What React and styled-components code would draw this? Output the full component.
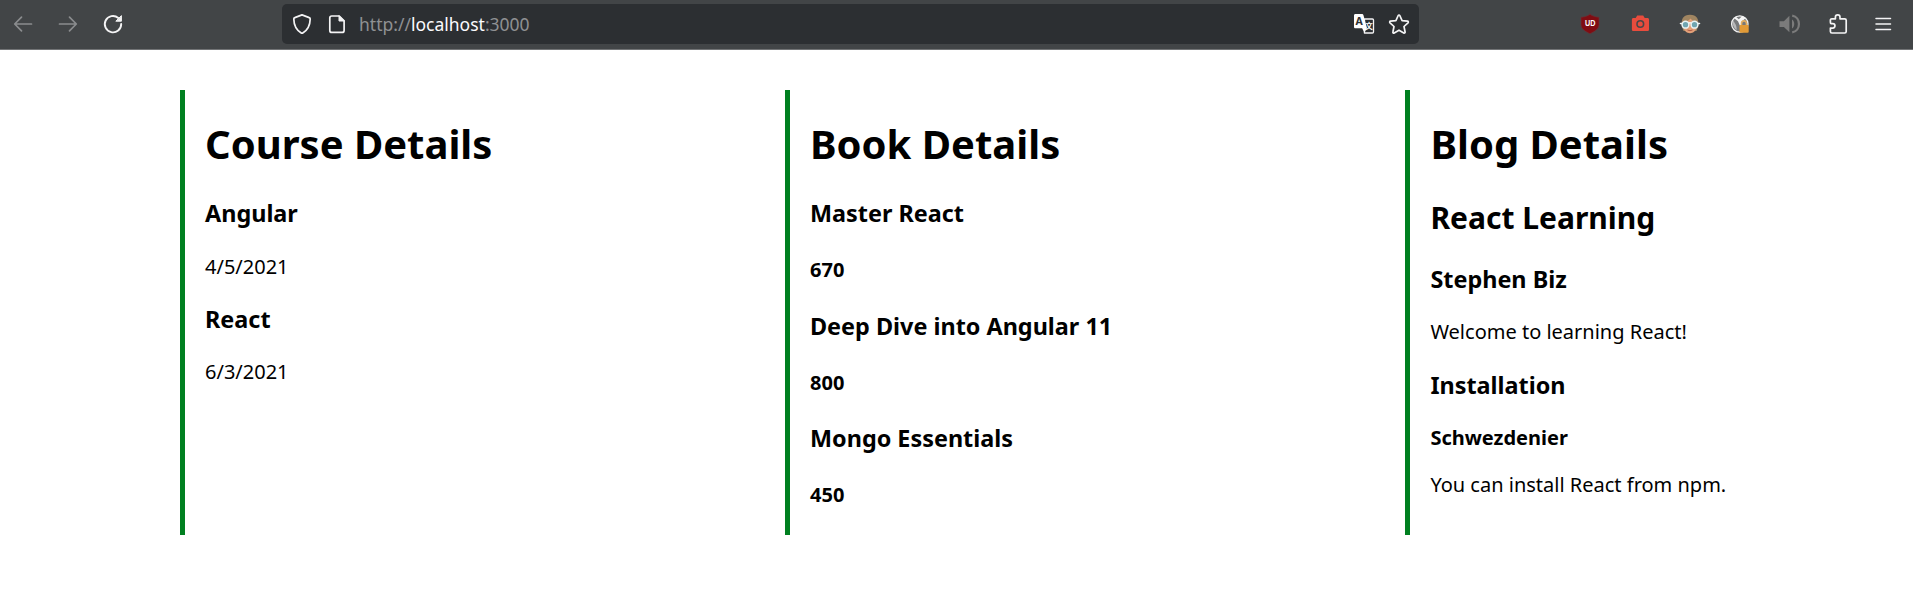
import React from "react";
import styled, { createGlobalStyle } from "styled-components";

const GlobalStyle = createGlobalStyle`
  * { box-sizing: border-box; }
  body { margin: 0; background: #fff; color: #000; font-family: "Noto Sans", sans-serif; overflow: hidden; }
`;

const Toolbar = styled.header`
  display: flex;
  align-items: center;
  height: 50px;
  padding: 0 18px 2px 11px;
  background: #424547;
  border-bottom: 1px solid #727476;
`;

const ButtonGroup = styled.div`
  display: flex;
  align-items: center;
  gap: ${(p) => p.$gap}px;
  margin-left: ${(p) => p.$start || 0};
`;

const Glyph = styled.svg`
  display: block;
  flex: none;
  width: 24px;
  height: 24px;
  fill: none;
  stroke: ${(p) => p.$color || "#f4f4f5"};
  stroke-width: 1.7;
  stroke-linecap: round;
  stroke-linejoin: round;
`;

const AddressBar = styled.div`
  display: flex;
  align-items: center;
  width: 1137px;
  height: 40px;
  margin-left: 157px;
  padding: 0 8px;
  border-radius: 5px;
  background: #2c2f32;
`;

const Url = styled.div`
  flex: 1;
  margin-left: 10px;
  font-size: 17.5px;
  line-height: 24px;
  color: #8f9193;
`;

const Host = styled.span`
  color: #fbfbfe;
`;

const Columns = styled.main`
  display: grid;
  grid-template-columns: 605px 620.4px 1fr;
  height: 445.5px;
  margin: 39.7px 0 0 180px;
`;

const Panel = styled.section`
  display: flow-root;
  border-left: 5px solid #008020;
  padding-left: 20px;
`;

const Title = styled.h1`
  margin: 26px 0 26.6px;
  font-size: 40px;
  line-height: 55px;
`;

const Heading = styled.h2`
  margin: 24.5px 0;
  font-size: 30px;
  line-height: 41px;
`;

const Subheading = styled.h3`
  margin: 23.4px 0;
  font-size: 23.4px;
  line-height: 32px;
`;

const Label = styled.h4`
  margin: 26.8px 0;
  font-size: 20px;
  line-height: 27px;
`;

const Text = styled.p`
  margin: 20px 0;
  font-size: 20px;
  line-height: 27px;
`;

const Author = styled(Text)`
  font-weight: 700;
`;

const courses = [
  { name: "Angular", date: "4/5/2021" },
  { name: "React", date: "6/3/2021" },
];

const books = [
  { name: "Master React", price: 670 },
  { name: "Deep Dive into Angular 11", price: 800 },
  { name: "Mongo Essentials", price: 450 },
];

const BackIcon = () => (
  <Glyph $color="#8a8c8e"><path d="M20.5 12H4M10.5 5.2L3.7 12l6.8 6.8" /></Glyph>
);
const ForwardIcon = () => (
  <Glyph $color="#8a8c8e"><path d="M3.5 12H20M13.5 5.2l6.8 6.8-6.8 6.8" /></Glyph>
);
const ReloadIcon = () => (
  <Glyph>
    <path d="M17.3 5.9A8.2 8.2 0 1 0 20.2 12" strokeWidth="1.9" />
    <path d="M20.4 4v5.2h-5.2z" fill="#f4f4f5" strokeWidth="1" />
  </Glyph>
);
const ShieldIcon = () => (
  <Glyph><path d="M12 2.9l7.2 2.7c.6.2 1 .7 1 1.3-.1 5.4-2 10.5-7.1 13.8a2 2 0 0 1-2.2 0C5.8 17.4 3.9 12.3 3.8 6.9c0-.6.4-1.1 1-1.3z" /></Glyph>
);
const PageIcon = () => (
  <Glyph>
    <path d="M6.8 4h7.4l4.9 4.9v9.5a2 2 0 0 1-2 2H6.8a2 2 0 0 1-2-2V6a2 2 0 0 1 2-2z" />
    <path d="M14 4v5h5z" fill="#f4f4f5" strokeWidth="1" />
  </Glyph>
);
const TranslateIcon = () => (
  <Glyph>
    <path d="M12.5 7h7.9c.7 0 1.1.4 1.1 1.1v11.8c0 .7-.4 1.1-1.1 1.1h-8z" strokeWidth="1.3" />
    <path d="M3.4 2h6.8c.6 0 1 .3 1.2.9L15 16l-2.5 4.7-2.4-4.4H3.4C2.6 16.3 2 15.7 2 15V3.4C2 2.6 2.6 2 3.4 2z" fill="#fff" stroke="none" />
    <text x="3.5" y="13.2" fill="#2c2f32" stroke="none" fontSize="10.5" fontWeight="700" fontFamily="Noto Sans">A</text>
    <text x="13.3" y="17.4" fill="#fff" stroke="none" fontSize="7.5" fontWeight="700" fontFamily="Noto Sans CJK SC">文</text>
  </Glyph>
);
const StarIcon = () => (
  <Glyph><path d="M11.2 3.5c.3-.7 1.3-.7 1.6 0l2.3 5.1 5.4.6c.8.1 1.1 1 .5 1.6l-4 3.7 1.1 5.5c.1.8-.6 1.4-1.3 1L12 18.2 7.2 21c-.7.4-1.5-.2-1.3-1L7 14.5l-4-3.7c-.6-.6-.3-1.5.5-1.6l5.4-.6z" /></Glyph>
);
const BlockerIcon = () => (
  <Glyph>
    <path d="M12 2.3c2.6 1.9 5.5 2.7 9 2.9v7.3c0 4.6-3.8 6.6-9 9.2-5.2-2.6-9-4.6-9-9.2V5.2c3.5-.2 6.4-1 9-2.9z" fill="#800c12" stroke="#6a3036" strokeWidth=".7" />
    <text x="12.2" y="14.2" textAnchor="middle" textLength="10.4" lengthAdjust="spacingAndGlyphs" fill="#fff" stroke="none" fontSize="8.6" fontWeight="700" fontFamily="Liberation Sans">UD</text>
  </Glyph>
);
const CameraIcon = () => (
  <Glyph>
    <path d="M9.2 3.6h6l1.5 2.4h2.7c1 0 1.6.6 1.6 1.6v9.8c0 1-.6 1.6-1.6 1.6H5.5c-1 0-1.6-.6-1.6-1.6V7.6c0-1 .6-1.6 1.6-1.6h2.2z" fill="#e84c3d" stroke="none" />
    <circle cx="12.3" cy="12" r="3.3" stroke="#4a4648" strokeWidth="1.6" />
  </Glyph>
);
const FaceIcon = () => (
  <Glyph>
    <path d="M4 15C2.5 7 5.5 2.8 12 2.800S21.500 7 20 15l-1.500 4h-13z" fill="#a08561" stroke="none" />
    <path d="M5.8 11C9 10 11 8 12.5 6.5 14 8.5 16 9.5 18.3 10.5V15c0 3.5-3 6.2-6.3 6.2S5.800 18.500 5.800 15z" fill="#e3a078" stroke="none" />
    <path d="M9.8 18.2q2.2 1.2 4.4 0" stroke="#b05a45" strokeWidth="1" />
    <path d="M2.5 11.5h2M19.5 11.5h2M10 11.5q2-1.5 4 0" stroke="#eef6f6" strokeWidth="1.6" />
    <circle cx="7.5" cy="12.7" r="3.4" fill="#6fa5b0" stroke="#e9f3f3" strokeWidth="1.5" />
    <circle cx="16.5" cy="12.7" r="3.4" fill="#6fa5b0" stroke="#e9f3f3" strokeWidth="1.5" />
  </Glyph>
);
const GlobeLockIcon = () => (
  <Glyph>
    <circle cx="11.8" cy="12" r="8.2" fill="#77797b" stroke="#f2f2f2" strokeWidth="1.3" />
    <path d="M7.5 4.5l3.3 2.7 3.5-3.2 3.2 2.2-3.7 3.3-1.3 5.5-2.5-5.7-3.7-3z" fill="#f5f5f5" stroke="none" />
    <path d="M5 8.5c2 2.5 3.8 5 3.7 9.5C5.5 16 4.2 12.5 5 8.5z" fill="#b8b9ba" stroke="none" />
    <path d="M13.5 14v-2.2c0-3.9 5-3.9 5 0V14" stroke="#e1ad62" strokeWidth="1.6" />
    <rect x="11.5" y="13" width="9.2" height="7.7" rx="1" fill="#e19a37" stroke="none" />
  </Glyph>
);
const SpeakerIcon = () => (
  <Glyph $color="#7b7b7b">
    <path d="M1.5 9.2h4.4l5.5-5.4v16.4L5.9 15H1.5z" fill="#7b7b7b" stroke="none" />
    <path d="M14 7.5c3 1.8 3 7.2 0 9z" fill="#7b7b7b" stroke="none" />
    <path d="M14.2 3.7c9 1.5 9 15.1 0 16.6" strokeWidth="2.2" strokeLinecap="butt" />
  </Glyph>
);
const PuzzleIcon = () => (
  <Glyph><path d="M4.4 10.2V8.3c0-.9.6-1.5 1.5-1.5h3.5V5.2c0-3.1 4.6-3.1 4.6 0v1.6h4.7c.9 0 1.5.6 1.5 1.5v11.2c0 .9-.6 1.5-1.5 1.5H5.9c-.9 0-1.5-.6-1.5-1.5v-3.4h2.3c3 0 3-4.500 0-4.500H5.200c-.5 0-.8-.4-.8-1.400z" /></Glyph>
);
const MenuIcon = () => (
  <Glyph><path d="M5 6.5h14.500M5 12h14.500M5 17.500h14.500" strokeWidth="1.5" /></Glyph>
);

export default function App() {
  return (
    <>
      <GlobalStyle />
      <Toolbar>
        <ButtonGroup $gap={21}>
          <BackIcon />
          <ForwardIcon />
          <ReloadIcon />
        </ButtonGroup>
        <AddressBar>
          <ButtonGroup $gap={11}>
            <ShieldIcon />
            <PageIcon />
          </ButtonGroup>
          <Url>http://<Host>localhost</Host>:3000</Url>
          <ButtonGroup $gap={11}>
            <TranslateIcon />
            <StarIcon />
          </ButtonGroup>
        </AddressBar>
        <ButtonGroup $gap={26} $start="auto">
          <BlockerIcon />
          <CameraIcon />
          <FaceIcon />
          <GlobeLockIcon />
          <SpeakerIcon />
        </ButtonGroup>
        <ButtonGroup $gap={21} $start="24px">
          <PuzzleIcon />
          <MenuIcon />
        </ButtonGroup>
      </Toolbar>
      <Columns>
        <Panel>
          <Title>Course Details</Title>
          {courses.map((course) => (
            <React.Fragment key={course.name}>
              <Subheading>{course.name}</Subheading>
              <Text>{course.date}</Text>
            </React.Fragment>
          ))}
        </Panel>
        <Panel>
          <Title>Book Details</Title>
          {books.map((book) => (
            <React.Fragment key={book.name}>
              <Subheading>{book.name}</Subheading>
              <Label>{book.price}</Label>
            </React.Fragment>
          ))}
        </Panel>
        <Panel>
          <Title>Blog Details</Title>
          <Heading>React Learning</Heading>
          <Subheading>Stephen Biz</Subheading>
          <Text>Welcome to learning React!</Text>
          <Subheading>Installation</Subheading>
          <Author>Schwezdenier</Author>
          <Text>You can install React from npm.</Text>
        </Panel>
      </Columns>
    </>
  );
}
